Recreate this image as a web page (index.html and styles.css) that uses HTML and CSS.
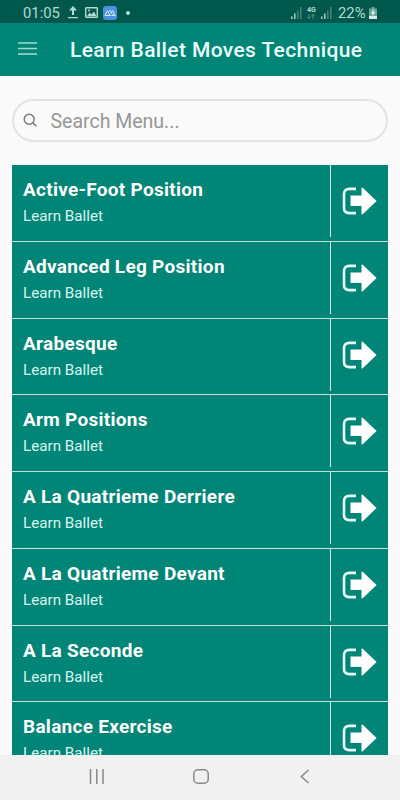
FILE: index.html
```html
<!DOCTYPE html>
<html lang="en">
<head>
    <meta charset="UTF-8">
    <meta name="viewport" content="width=device-width, initial-scale=1.0">
    <title>Learn Ballet Moves Technique</title>
    <link rel="stylesheet" href="styles.css">
</head>
<body>
    <svg width="0" height="0" class="defs">
        <symbol id="go" viewBox="0 0 36 28">
            <path d="M14 1.9H7.5Q2 1.9 2 7v14q0 5.1 5.5 5.1H14" fill="none" stroke="#e9fffb" stroke-width="2.6"/>
            <path d="M8.5 8.5h11V1.3q0-1.3 1.2-.6L34.6 14 20.7 27.3Q19.5 28 19.5 26.7V19h-11z" fill="#fff"/>
        </symbol>
        <symbol id="signal" viewBox="0 0 11 12">
            <path d="M.8 9.5V12M3.8 6.5V12" stroke="#c0dfd9" stroke-width="1.3"/>
            <path d="M6.8 3.5V12M9.8 0v12" stroke="#4f8f84" stroke-width="1.3"/>
        </symbol>
    </svg>

    <div class="status-bar">
        <span class="time">01:05</span>
        <svg class="upload" width="10" height="13" viewBox="0 0 10 13">
            <path d="M5 0l4 4.4H6V9H4V4.4H1zM0 11h10v1.3H0z" fill="#b5dad3"/>
        </svg>
        <svg class="photo" width="13" height="11" viewBox="0 0 13 11">
            <rect x=".7" y=".7" width="11.6" height="9.6" rx=".6" fill="none" stroke="#b5dad3" stroke-width="1.4"/>
            <path d="M2 9l2.7-3.5L6.5 7.5 9 4.5 11.3 9z" fill="#b5dad3"/>
            <circle cx="4" cy="3.4" r="1" fill="#b5dad3"/>
        </svg>
        <svg class="app" width="14" height="14" viewBox="0 0 14 14">
            <rect width="14" height="14" rx="3" fill="#4c91e2"/>
            <path d="M2 9.5l2.4-4.7 2.8 4.7zM6 5.2l1-.8 2.5 4.3M8.6 6.5l1-2 2.6 5H8.5" fill="none" stroke="#d9efff" stroke-width="1"/>
        </svg>
        <span class="dot"></span>
        <svg class="signal first" width="11" height="12"><use href="#signal"/></svg>
        <div class="network">
            <span>4G</span>
            <svg width="8" height="5" viewBox="0 0 8 5">
                <path d="M2 0v4.5M.3 3L2 4.6 3.7 3M6 5V.5M4.3 2L6 .4 7.7 2" fill="none" stroke="#5f9b90" stroke-width=".9"/>
            </svg>
        </div>
        <svg class="signal" width="11" height="12"><use href="#signal"/></svg>
        <span class="percent">22%</span>
        <svg class="battery" width="8" height="12" viewBox="0 0 8 12">
            <path d="M2.5 0h3v1.5H8V10H0V1.5h2.5z" fill="#6da69b"/>
            <path d="M0 9h8v3H0z" fill="#d6ece8"/>
            <path d="M4.8 2L2 6.3h1.7L3.2 9.5 6.3 5H4.5z" fill="#e5f6f3"/>
        </svg>
    </div>

    <header class="header">
        <svg width="19" height="13" viewBox="0 0 19 13">
            <path d="M0 1h19M0 6.5h19M0 12h19" stroke="#a3ddd2" stroke-width="1.7"/>
        </svg>
        <h1>Learn Ballet Moves Technique</h1>
    </header>

    <main class="content">
        <div class="search">
            <svg width="15" height="15" viewBox="0 0 15 15">
                <path d="M9.8 9.7l3.5 3.6" stroke="#777" stroke-width="1.5"/>
                <circle cx="6.2" cy="6.2" r="5" fill="none" stroke="#777" stroke-width="1.4"/>
            </svg>
            <span>Search Menu...</span>
        </div>

        <div class="list">
            <div class="item">
                <div class="text"><h2>Active-Foot Position</h2><p>Learn Ballet</p></div>
                <div class="action"><svg width="36" height="28"><use href="#go"/></svg></div>
            </div>
            <div class="item">
                <div class="text"><h2>Advanced Leg Position</h2><p>Learn Ballet</p></div>
                <div class="action"><svg width="36" height="28"><use href="#go"/></svg></div>
            </div>
            <div class="item">
                <div class="text"><h2>Arabesque</h2><p>Learn Ballet</p></div>
                <div class="action"><svg width="36" height="28"><use href="#go"/></svg></div>
            </div>
            <div class="item">
                <div class="text"><h2>Arm Positions</h2><p>Learn Ballet</p></div>
                <div class="action"><svg width="36" height="28"><use href="#go"/></svg></div>
            </div>
            <div class="item">
                <div class="text"><h2>A La Quatrieme Derriere</h2><p>Learn Ballet</p></div>
                <div class="action"><svg width="36" height="28"><use href="#go"/></svg></div>
            </div>
            <div class="item">
                <div class="text"><h2>A La Quatrieme Devant</h2><p>Learn Ballet</p></div>
                <div class="action"><svg width="36" height="28"><use href="#go"/></svg></div>
            </div>
            <div class="item">
                <div class="text"><h2>A La Seconde</h2><p>Learn Ballet</p></div>
                <div class="action"><svg width="36" height="28"><use href="#go"/></svg></div>
            </div>
            <div class="item">
                <div class="text"><h2>Balance Exercise</h2><p>Learn Ballet</p></div>
                <div class="action"><svg width="36" height="28"><use href="#go"/></svg></div>
            </div>
        </div>
    </main>

    <nav class="nav-bar">
        <svg width="16" height="15" viewBox="0 0 16 15">
            <path d="M1.5 0v15M7.8 0v15M14 0v15" stroke="#888" stroke-width="1.5"/>
        </svg>
        <svg width="16" height="15" viewBox="0 0 16 15">
            <rect x=".8" y=".8" width="14.4" height="13.4" rx="4" fill="none" stroke="#888" stroke-width="1.5"/>
        </svg>
        <svg width="16" height="15" viewBox="0 0 16 15">
            <path d="M11.5 1L4.3 7.5l7.2 6.5" fill="none" stroke="#888" stroke-width="1.5"/>
        </svg>
    </nav>
</body>
</html>
```

FILE: styles.css
```css
* {
    box-sizing: border-box;
}
body {
    margin: 0;
    height: 800px;
    display: flex;
    flex-direction: column;
    overflow: hidden;
    background: #fafafa;
    font-family: Roboto, sans-serif;
}
svg {
    display: block;
    flex: none;
}
.defs {
    position: absolute;
}
h1, h2, p {
    margin: 0;
    white-space: nowrap;
}
.status-bar {
    flex: none;
    display: flex;
    align-items: center;
    height: 23px;
    padding: 2px 23px 0;
    background: #00574b;
    color: #b5dad3;
    font-size: 14.8px;
    line-height: 20px;
}
.time {
    width: 45px;
    padding-top: 1px;
}
.photo {
    margin-left: 7px;
}
.app {
    margin-left: 5px;
}
.dot {
    width: 4px;
    height: 4px;
    margin-left: 9px;
    border-radius: 50%;
    background: #b5dad3;
}
.first {
    margin-left: auto;
}
.network {
    width: 10px;
    margin: 0 4px 0 5px;
    font-size: 7px;
    font-weight: bold;
    line-height: 7px;
}
.percent {
    width: 27px;
    margin: 0 4px 0 6px;
    padding-top: 1px;
}
.header {
    flex: none;
    display: flex;
    align-items: center;
    height: 52.5px;
    padding: 0 18px 2px;
    background: #008577;
}
.header h1 {
    margin: 4px 0 0 33px;
    color: #e9fffb;
    font-size: 21px;
    font-weight: 500;
    line-height: 24px;
    letter-spacing: 0.38px;
}
.content {
    flex: 1;
    min-height: 0;
    overflow: hidden;
    padding: 23.5px 12px 0;
}
.search {
    display: flex;
    align-items: center;
    height: 43px;
    padding: 0 9px;
    border: 2px solid #e2e2e7;
    border-radius: 22px;
    color: #969696;
    font-size: 19.5px;
}
.search span {
    margin: 1px 0 0 12.5px;
}
.list {
    margin-top: 23px;
    background: #008577;
}
.item {
    display: flex;
    height: 76.75px;
    border-bottom: 1px solid #c2e4df;
    color: #fff;
}
.text {
    flex: 1;
    padding: 13px 0 0 11px;
}
.text h2 {
    font-size: 19px;
    font-weight: bold;
    line-height: 24px;
    letter-spacing: 0.28px;
}
.text p {
    margin-top: 4px;
    color: #d9f5f0;
    font-size: 15.2px;
    line-height: 20px;
}
.action {
    width: 58px;
    height: 72px;
    padding-left: 11px;
    display: flex;
    align-items: center;
    border-left: 1px solid #d9efec;
}
.nav-bar {
    flex: none;
    display: flex;
    justify-content: space-between;
    height: 45.5px;
    padding: 14px 87px 0 89px;
    background: #f1f1f1;
}
```
